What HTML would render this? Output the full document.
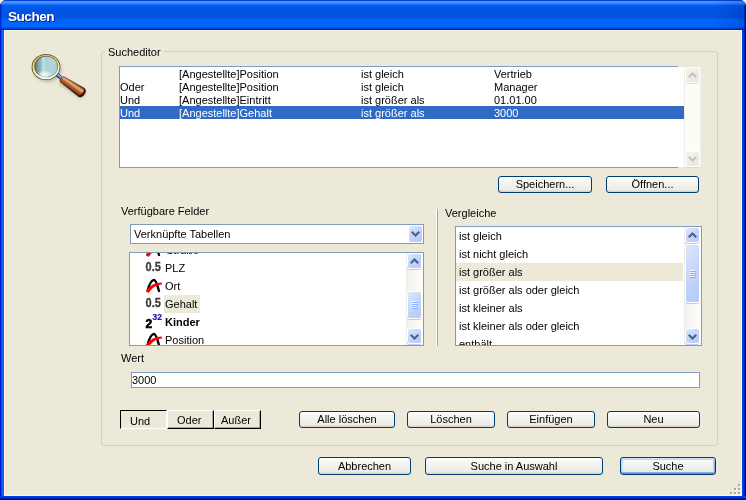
<!DOCTYPE html>
<html><head><meta charset="utf-8">
<style>
*{box-sizing:border-box}
html,body{margin:0;padding:0}
body{will-change:transform;width:746px;height:500px;overflow:hidden;position:relative;background:#fff8e0;font-family:"Liberation Sans",sans-serif;font-size:11px;color:#000}
.a{position:absolute}
.t{position:absolute;white-space:nowrap;line-height:13px}
#frame{left:0;top:0;width:746px;height:500px;border-radius:6px 6px 0 0;background:#0831d9;overflow:hidden}
#title{left:0;top:0;width:746px;height:30px;background:linear-gradient(180deg,#0a40d8 0px,#0a40d8 1px,#3d95ff 1px,#3d95ff 3px,#1a78fa 4px,#0058ee 6px,#0054e3 10px,#0054e3 17px,#0062f8 20px,#0066ff 22px,#0066ff 27px,#0046d8 28px,#0046d8 29px,#0024b4 29px,#0024b4 30px)}
#ttext{left:8px;top:9px;font-size:13.6px;letter-spacing:-0.5px;font-weight:bold;color:#fff;text-shadow:1px 1px 0 #0a1e80;line-height:16px}
#lb{left:0;top:30px;width:4px;height:470px;background:linear-gradient(90deg,#0019cf 0,#0019cf 1px,#0842e8 1px,#166aee 3px,#0855dd 4px)}
#rb{left:742px;top:30px;width:4px;height:470px;background:linear-gradient(90deg,#0040f0 0,#0040f0 1px,#0038e0 1px,#0038e0 2px,#0024b0 2px,#0024b0 3px,#001080 3px)}
#bb{left:0;top:496px;width:746px;height:4px;background:linear-gradient(180deg,#0040f0 0,#0040f0 1px,#0036dc 1px,#0036dc 2px,#0020a8 2px,#0020a8 3px,#001080 3px)}
#content{left:4px;top:30px;width:738px;height:466px;background:#ece9d8;border:1px solid #fff5dc}
.gb{border:1px solid #d0d0bf;border-radius:3px}
.lst{background:#fff;border:1px solid #7f9db9}
.btn{position:absolute;border:1px solid #003c74;border-radius:3px;background:linear-gradient(180deg,#fff 0%,#f6f6f3 25%,#ecebe6 85%,#d6d0c5 100%);text-align:center;line-height:15px;white-space:nowrap}
.btn.def{box-shadow:inset 0 1px 0 #cee7ff,inset 0 2px 0 #bcd4f6,inset 0 -1px 0 #6982ee,inset 0 -2px 0 #89ade4,inset 1px 0 0 #bcd4f6,inset -1px 0 0 #89ade4,inset 2px 0 0 #cee7ff,inset -2px 0 0 #bcd4f6}
.sel{background:#316ac5;color:#fff}
.sb{background:linear-gradient(90deg,#f3f1ec,#fefefb)}
.sbb{position:absolute;border:1px solid #fff;border-radius:3px;box-shadow:0 1px 0 rgba(140,170,235,.55);background:linear-gradient(135deg,#dde7fd 0%,#c6d6fc 45%,#b5c9f7 100%)}
.sbb.dis{background:linear-gradient(135deg,#f4f4f0,#e8e8e2);border-color:#fff;box-shadow:0 1px 0 rgba(200,200,190,.5)}
.tg{position:absolute;text-align:center;line-height:17px;background:#ece9d8}
.tg.up{border-top:1px solid #fff;border-left:1px solid #fff;box-shadow:inset -1px -1px 0 #aca899;border-right:1px solid #000;border-bottom:1px solid #000}
.tg.dn{border-top:1px solid #000;border-left:1px solid #000;border-right:1px solid #fff;border-bottom:1px solid #fff}
</style></head><body>
<div id="frame" class="a">
  <div id="title" class="a"></div>
  <div class="a" style="left:0;top:4px;width:2px;height:26px;background:linear-gradient(90deg,rgba(0,20,190,.85),rgba(0,40,200,.3))"></div>
  <div class="a" style="left:712px;top:0;width:34px;height:30px;background:linear-gradient(90deg,rgba(0,20,140,0),rgba(0,20,140,.22))"></div>
  <div class="a" style="left:744px;top:5px;width:2px;height:25px;background:linear-gradient(90deg,rgba(0,20,150,.5),rgba(0,16,128,.95))"></div>
  <div id="ttext" class="t">Suchen</div>
  <div id="lb" class="a"></div>
  <div id="rb" class="a"></div>
  <div id="bb" class="a"></div>
</div>
<div id="content" class="a"></div>

<!-- magnifier -->
<svg class="a" style="left:24px;top:46px" width="70" height="60" viewBox="24 46 70 60">
  <defs>
    <linearGradient id="gl" x1="0" y1="0" x2="1" y2="0">
      <stop offset="0" stop-color="#56767c"/><stop offset="0.12" stop-color="#7a9ca2"/><stop offset="0.3" stop-color="#a4c4c8"/><stop offset="0.36" stop-color="#c8e2e4"/><stop offset="0.46" stop-color="#b0d2d6"/><stop offset="0.8" stop-color="#b4d6da"/><stop offset="1" stop-color="#a0c4c8"/>
    </linearGradient>
    <radialGradient id="spot" cx="0.5" cy="0.5" r="0.5">
      <stop offset="0" stop-color="#fff" stop-opacity="0.95"/><stop offset="0.6" stop-color="#f0ffff" stop-opacity="0.5"/><stop offset="1" stop-color="#fff" stop-opacity="0"/>
    </radialGradient>
    <linearGradient id="ring" x1="0" y1="0" x2="0.3" y2="1">
      <stop offset="0" stop-color="#e0a840"/><stop offset="0.45" stop-color="#f0d868"/><stop offset="0.8" stop-color="#fbf3c8"/><stop offset="1" stop-color="#fffff0"/>
    </linearGradient>
    <linearGradient id="hd" gradientUnits="userSpaceOnUse" x1="73.8" y1="81.9" x2="69.2" y2="88.5">
      <stop offset="0" stop-color="#6a3010"/><stop offset="0.14" stop-color="#c07444"/><stop offset="0.34" stop-color="#eaae7c"/><stop offset="0.58" stop-color="#bc6a34"/><stop offset="0.88" stop-color="#8a4218"/><stop offset="1" stop-color="#4a2008"/>
    </linearGradient>
    <filter id="bl" x="-30%" y="-30%" width="160%" height="160%"><feGaussianBlur stdDeviation="1.6"/></filter>
  </defs>
  <g filter="url(#bl)" opacity="0.4" fill="#7a7460">
    <ellipse cx="47.5" cy="69.5" rx="14" ry="12.5"/>
    <path d="M62 80 L86 91 L81 99 L59 84 Z"/>
  </g>
  <path d="M55.5 73.2 L61.8 78.6" stroke="#1a2a50" stroke-width="3.8"/>
  <path d="M55.8 73 L61.6 78" stroke="#78aaf2" stroke-width="2.2"/>
  <path d="M59.8 81.6 Q60.5 77.5 63.6 76.6 L84.5 88.3 Q87.6 92.6 82 96.6 Q80 97.6 77.8 96 Z" fill="url(#hd)" stroke="#3a1806" stroke-width="0.7" stroke-opacity="0.75"/>
  <path d="M84.5 88.3 Q87.6 92.6 82 96.6 Q80 97.6 77.8 96 Q83.5 94.5 84.5 88.3 Z" fill="#1e0a02" opacity="0.9"/>
  <ellipse cx="46" cy="67" rx="14.4" ry="13.1" fill="#5c4a24"/>
  <ellipse cx="46" cy="67" rx="13.6" ry="12.3" fill="url(#ring)"/>
  <ellipse cx="46.2" cy="66.6" rx="11.9" ry="10.7" fill="#3e5a60"/>
  <ellipse cx="46.4" cy="66.8" rx="11.3" ry="10.2" fill="url(#gl)"/>
  <ellipse cx="44.5" cy="74.5" rx="7.5" ry="4.2" fill="url(#spot)"/>
</svg>

<!-- group box -->
<div class="a gb" style="left:101px;top:51px;width:617px;height:395px"></div>
<div class="t" style="left:105px;top:46px;padding:0 3px;background:#ece9d8">Sucheditor</div>

<!-- sucheditor list -->
<div class="a" style="left:119px;top:66px;width:559px;height:102px;border:1px solid #7f9db9;border-right:none;background:#fff"></div>
<div class="a" style="left:678px;top:67px;width:6px;height:100px;background:#fff"></div>
<div class="a sel" style="left:120px;top:106px;width:564px;height:13px"></div>
<div class="t" style="left:179px;top:68px">[Angestellte]Position</div>
<div class="t" style="left:361px;top:68px">ist gleich</div>
<div class="t" style="left:494px;top:68px">Vertrieb</div>
<div class="t" style="left:120px;top:81px">Oder</div>
<div class="t" style="left:179px;top:81px">[Angestellte]Position</div>
<div class="t" style="left:361px;top:81px">ist gleich</div>
<div class="t" style="left:494px;top:81px">Manager</div>
<div class="t" style="left:120px;top:94px">Und</div>
<div class="t" style="left:179px;top:94px">[Angestellte]Eintritt</div>
<div class="t" style="left:361px;top:94px">ist größer als</div>
<div class="t" style="left:494px;top:94px">01.01.00</div>
<div class="t" style="left:120px;top:107px;color:#fff">Und</div>
<div class="t" style="left:179px;top:107px;color:#fff">[Angestellte]Gehalt</div>
<div class="t" style="left:361px;top:107px;color:#fff">ist größer als</div>
<div class="t" style="left:494px;top:107px;color:#fff">3000</div>
<!-- disabled scrollbar -->
<div class="a" style="left:684px;top:67px;width:17px;height:100px;background:#fdfdf8;border-left:1px solid #eeede6;border-right:1px solid #efeee8"></div>
<div class="sbb dis" style="left:685px;top:67px;width:15px;height:16px"></div>
<div class="sbb dis" style="left:685px;top:151px;width:15px;height:16px"></div>

<!-- buttons -->
<div class="btn" style="left:498px;top:176px;width:94px;height:17px">Speichern...</div>
<div class="btn" style="left:606px;top:176px;width:93px;height:17px">Öffnen...</div>

<div class="t" style="left:121px;top:205px">Verfügbare Felder</div>
<div class="a" style="left:436px;top:209px;width:1px;height:137px;background:#fff"></div>
<div class="a" style="left:437px;top:209px;width:1px;height:137px;background:#aca899"></div>
<div class="t" style="left:445px;top:207px">Vergleiche</div>

<!-- combo -->
<div class="a lst" style="left:130px;top:224px;width:294px;height:20px"></div>
<div class="t" style="left:134px;top:228px">Verknüpfte Tabellen</div>
<div class="sbb" style="left:409px;top:226px;width:13px;height:16px;border:none;border-radius:2px;box-shadow:none"></div>

<!-- fields list -->
<div class="a lst" style="left:129px;top:252px;width:295px;height:94px;overflow:hidden"></div>
<div class="a sb" style="left:406px;top:253px;width:17px;height:92px;border-left:1px solid #eeede6"></div>
<div class="sbb" style="left:407px;top:253px;width:15px;height:16px"></div>
<div class="sbb" style="left:407px;top:291px;width:15px;height:28px"></div>
<div class="sbb" style="left:407px;top:328px;width:15px;height:16px"></div>
<div class="a" style="left:130px;top:253px;width:276px;height:92px;overflow:hidden">
  <div class="t" style="left:36px;top:-9px">Straße</div>
</div>
<div class="t" style="left:165px;top:262px">PLZ</div>
<div class="t" style="left:165px;top:280px">Ort</div>
<div class="a" style="left:164px;top:295px;width:36px;height:18px;background:#ece9d8"></div>
<div class="t" style="left:165px;top:298px">Gehalt</div>
<div class="t" style="left:165px;top:316px;font-weight:bold">Kinder</div>
<div class="t" style="left:165px;top:334px">Position</div>

<!-- vergleiche list -->
<div class="a lst" style="left:455px;top:226px;width:247px;height:120px"></div>
<div class="a" style="left:456px;top:263px;width:227px;height:18px;background:#ece9d8"></div>
<div class="a" style="left:456px;top:227px;width:228px;height:118px;overflow:hidden">
<div class="t" style="left:3px;top:3px">ist gleich</div>
<div class="t" style="left:3px;top:21px">ist nicht gleich</div>
<div class="t" style="left:3px;top:39px">ist größer als</div>
<div class="t" style="left:3px;top:57px">ist größer als oder gleich</div>
<div class="t" style="left:3px;top:75px">ist kleiner als</div>
<div class="t" style="left:3px;top:93px">ist kleiner als oder gleich</div>
<div class="t" style="left:3px;top:111px">enthält</div>
</div>
<div class="a sb" style="left:684px;top:227px;width:17px;height:118px;border-left:1px solid #eeede6"></div>
<div class="sbb" style="left:685px;top:227px;width:15px;height:16px"></div>
<div class="sbb" style="left:685px;top:244px;width:15px;height:59px"></div>
<div class="sbb" style="left:685px;top:328px;width:15px;height:16px"></div>

<div class="t" style="left:121px;top:352px">Wert</div>
<div class="a lst" style="left:131px;top:372px;width:569px;height:16px"></div>
<div class="t" style="left:132px;top:374px">3000</div>

<div class="tg dn" style="left:120px;top:410px;width:47px;height:19px"></div>
<div class="t" style="left:130px;top:415px">Und</div>
<div class="tg up" style="left:167px;top:410px;width:47px;height:19px"></div>
<div class="t" style="left:177px;top:414px">Oder</div>
<div class="tg up" style="left:214px;top:410px;width:47px;height:19px"></div>
<div class="t" style="left:221px;top:414px">Außer</div>

<div class="btn" style="left:299px;top:411px;width:96px;height:17px">Alle löschen</div>
<div class="btn" style="left:407px;top:411px;width:88px;height:17px">Löschen</div>
<div class="btn" style="left:507px;top:411px;width:88px;height:17px">Einfügen</div>
<div class="btn" style="left:607px;top:411px;width:93px;height:17px">Neu</div>

<div class="btn" style="left:318px;top:457px;width:93px;height:18px;line-height:16px">Abbrechen</div>
<div class="btn" style="left:425px;top:457px;width:178px;height:18px;line-height:16px">Suche in Auswahl</div>
<div class="btn def" style="left:620px;top:457px;width:96px;height:18px;line-height:16px">Suche</div>

<!-- small graphics overlay -->
<svg class="a" style="left:0;top:0" width="746" height="500" viewBox="0 0 746 500">
  <g fill="#4d6185">
    <path d="M411 232.5 L412.5 231 L415.5 234 L418.5 231 L420 232.5 L415.5 237 Z"/>
    <path d="M410 262.5 L411.5 264 L414.5 261 L417.5 264 L419 262.5 L414.5 258 Z"/>
    <path d="M410 335.5 L411.5 334 L414.5 337 L417.5 334 L419 335.5 L414.5 340 Z"/>
    <path d="M688 236.5 L689.5 238 L692.5 235 L695.5 238 L697 236.5 L692.5 232 Z"/>
    <path d="M688 335.5 L689.5 334 L692.5 337 L695.5 334 L697 335.5 L692.5 340 Z"/>
  </g>
  <g fill="#c3c3ba">
    <path d="M688 76.5 L689.5 78 L692.5 75 L695.5 78 L697 76.5 L692.5 72 Z"/>
    <path d="M688 157.5 L689.5 156 L692.5 159 L695.5 156 L697 157.5 L692.5 162 Z"/>
  </g>
  <g fill="#eef3fe">
    <rect x="411" y="301" width="6" height="1"/><rect x="411" y="303" width="6" height="1"/><rect x="411" y="305" width="6" height="1"/><rect x="411" y="307" width="6" height="1"/>
    <rect x="689" y="270" width="6" height="1"/><rect x="689" y="272" width="6" height="1"/><rect x="689" y="274" width="6" height="1"/><rect x="689" y="276" width="6" height="1"/>
  </g>
  <g fill="#8cb0f8">
    <rect x="412" y="302" width="6" height="1"/><rect x="412" y="304" width="6" height="1"/><rect x="412" y="306" width="6" height="1"/><rect x="412" y="308" width="6" height="1"/>
    <rect x="690" y="271" width="6" height="1"/><rect x="690" y="273" width="6" height="1"/><rect x="690" y="275" width="6" height="1"/><rect x="690" y="277" width="6" height="1"/>
  </g>
  <!-- field icons -->
  <clipPath id="fl"><rect x="130" y="253" width="276" height="92"/></clipPath>
  <g clip-path="url(#fl)">
  <g fill="#383838" font-family="Liberation Sans" font-weight="bold" font-size="12.8" stroke="#383838" stroke-width="0.25">
    <text transform="translate(145.6 271.4) scale(0.86 1)">0.5</text>
    <text transform="translate(145.6 307.4) scale(0.86 1)">0.5</text>
  </g>
  <g fill="none" stroke-linecap="round">
    <path d="M147.5 255 C148.5 251 151 244.3 154 243.8 C156.5 244.3 157 249 159 255" stroke="#000" stroke-width="2.3"/>
    <path d="M147.5 291 C148.5 287 151 280.3 154 279.8 C156.5 280.3 157 285 159 291" stroke="#000" stroke-width="2.3"/>
    <path d="M147.5 345 C148.5 341 151 334.3 154 333.8 C156.5 334.3 157 339 159 345" stroke="#000" stroke-width="2.3"/>
    <path d="M146.3 254.6 Q151.5 246.6 161.8 246.6 L161.8 248.5 Q153.5 249.2 149 256.6 Q147 257 146.3 254.6 Z" fill="#f00" stroke="none"/>
    <path d="M146.3 290.6 Q151.5 282.6 161.8 282.6 L161.8 284.5 Q153.5 285.2 149 292.6 Q147 293 146.3 290.6 Z" fill="#f00" stroke="none"/>
    <path d="M146.3 344.6 Q151.5 336.6 161.8 336.6 L161.8 338.5 Q153.5 339.2 149 346.6 Q147 347 146.3 344.6 Z" fill="#f00" stroke="none"/>
  </g>
  <text x="145.6" y="327.6" font-family="Liberation Sans" font-weight="bold" font-size="12" fill="#000" stroke="#000" stroke-width="0.6">2</text>
  <text x="152.6" y="320" font-family="Liberation Sans" font-weight="bold" font-size="8.4" fill="#1a1aa8" stroke="#1a1aa8" stroke-width="0.2">32</text>
  </g>
  <!-- resize grip -->
  <g fill="#aca899">
    <rect x="738" y="484" width="2" height="2"/>
    <rect x="734" y="488" width="2" height="2"/><rect x="738" y="488" width="2" height="2"/>
    <rect x="730" y="492" width="2" height="2"/><rect x="734" y="492" width="2" height="2"/><rect x="738" y="492" width="2" height="2"/>
  </g>
  <g fill="#fff">
    <rect x="740" y="485" width="1" height="2"/><rect x="739" y="486" width="1" height="1"/>
    <rect x="736" y="489" width="1" height="2"/><rect x="735" y="490" width="1" height="1"/>
    <rect x="740" y="489" width="1" height="2"/><rect x="739" y="490" width="1" height="1"/>
    <rect x="732" y="493" width="1" height="2"/><rect x="731" y="494" width="1" height="1"/>
    <rect x="736" y="493" width="1" height="2"/><rect x="735" y="494" width="1" height="1"/>
    <rect x="740" y="493" width="1" height="2"/><rect x="739" y="494" width="1" height="1"/>
  </g>
</svg>
</body></html>
